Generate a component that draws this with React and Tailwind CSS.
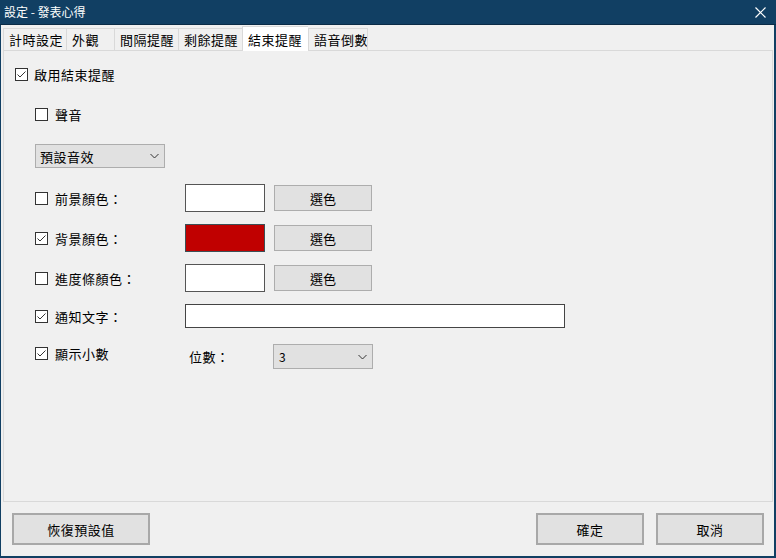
import React from "react";

const font = { fontFamily: '"Noto Sans CJK TC", "Noto Sans", sans-serif' };

const tabs = [
  { label: "計時設定", w: "w-[63px]" },
  { label: "外觀", w: "w-[48px]" },
  { label: "間隔提醒", w: "w-[64px]" },
  { label: "剩餘提醒", w: "w-[64px]" },
  { label: "結束提醒", w: "w-[66px]", active: true },
  { label: "語音倒數", w: "w-[60px]" },
];

function Check({ checked }) {
  return (
    <div className="w-[13px] h-[13px] shrink-0 border border-[#333333] bg-white flex items-center justify-center">
      {checked && (
        <svg width="11" height="11" viewBox="0 0 11 11">
          <path d="M1.5 5.5 L4 8 L9.5 2.5" fill="none" stroke="#333333" strokeWidth="1" />
        </svg>
      )}
    </div>
  );
}

function Chevron() {
  return (
    <svg width="9" height="6" viewBox="0 0 9 6">
      <path d="M0.5 1 L4.5 5 L8.5 1" fill="none" stroke="#333333" strokeWidth="1" />
    </svg>
  );
}

function Label({ checked, text }) {
  return (
    <div className="w-[150px] flex items-center gap-[7px]">
      <Check checked={checked} />
      <span className="text-[13px] tracking-[0.5px] leading-none text-black">{text}</span>
    </div>
  );
}

function ColorRow({ checked, text, color }) {
  return (
    <div className="h-[28px] flex items-center">
      <Label checked={checked} text={text} />
      <div
        className={`w-[80px] h-[28px] border ${color ? "bg-[#c00000] border-[#3c4f55]" : "bg-white border-[#555555]"}`}
      />
      <button
        type="button"
        className="ml-[9px] w-[98px] h-[26px] bg-[#e1e1e1] border border-[#adadad] text-[13px] leading-none text-black"
      >
        選色
      </button>
    </div>
  );
}

export default function App() {
  return (
    <div className="w-[776px] h-[558px] flex flex-col bg-[#f0f0f0] overflow-hidden" style={font}>
      <div className="h-[25px] shrink-0 bg-[#113f63] border-b border-[#0a2b46] flex items-center justify-between pl-[4px] pr-[10px]">
        <span className="text-[12px] leading-none text-white">設定 - 發表心得</span>
        <svg width="11" height="11" viewBox="0 0 11 11">
          <path d="M0.5 0.5 L10.5 10.5 M10.5 0.5 L0.5 10.5" stroke="#ffffff" strokeWidth="1.2" />
        </svg>
      </div>
      <div className="flex-1 flex flex-col border-l border-r-2 border-b-2 border-[#113f63] pl-[2px] pr-[1px]">
        <div className="h-[25px] shrink-0 flex items-end">
          {tabs.map((t, i) => (
            <div
              key={t.label}
              className={`${t.w} shrink-0 whitespace-nowrap overflow-hidden flex items-center pl-[5px] text-[13px] tracking-[0.5px] leading-none text-black border-t border-l border-[#d9d9d9] ${
                i === tabs.length - 1 ? "border-r" : ""
              } ${t.active ? "h-[25px] bg-white -mb-[1px] relative z-10" : "h-[22px] bg-[#f0f0f0]"}`}
            >
              {t.label}
            </div>
          ))}
        </div>
        <div className="h-[452px] shrink-0 border border-[#d9d9d9] bg-[#f0f0f0] flex flex-col pt-[16px]">
          <div className="h-[14px] flex items-center gap-[6px] pl-[11px]">
            <Check checked />
            <span className="text-[13px] tracking-[0.5px] leading-none text-black">啟用結束提醒</span>
          </div>
          <div className="pl-[31px] flex flex-col">
            <div className="mt-[27px] h-[13px] flex items-center">
              <Label text="聲音" />
            </div>
            <div className="mt-[23px] w-[130px] h-[24px] bg-[#e1e1e1] border border-[#adadad] flex items-center justify-between pl-[4px] pr-[5px]">
              <span className="text-[13px] tracking-[0.5px] leading-none text-black">預設音效</span>
              <Chevron />
            </div>
            <div className="mt-[16px] flex flex-col gap-[12px]">
              <ColorRow text="前景顏色：" />
              <ColorRow checked text="背景顏色：" color />
              <ColorRow text="進度條顏色：" />
              <div className="h-[24px] flex items-center">
                <Label checked text="通知文字：" />
                <div className="w-[380px] h-[24px] bg-white border border-[#444444]" />
              </div>
            </div>
            <div className="mt-[16px] h-[25px] flex items-center">
              <div className="-mt-[6px]">
                <Label checked text="顯示小數" />
              </div>
              <span className="ml-[4px] w-[84px] text-[13px] tracking-[0.5px] leading-none text-black">位數：</span>
              <div className="w-[100px] h-[25px] bg-[#e1e1e1] border border-[#adadad] flex items-center justify-between pl-[5px] pr-[5px]">
                <span className="text-[12px] leading-none text-black">3</span>
                <Chevron />
              </div>
            </div>
          </div>
        </div>
        <div className="flex-1 flex items-center justify-between pl-[9px] pr-[9px]">
          <button
            type="button"
            className="w-[138px] h-[32px] bg-[#e1e1e1] border-2 border-[#a8a8a8] text-[13px] tracking-[0.5px] leading-none text-black"
          >
            恢復預設值
          </button>
          <div className="flex gap-[12px]">
            <button
              type="button"
              className="w-[108px] h-[32px] bg-[#e1e1e1] border-2 border-[#a8a8a8] text-[13px] tracking-[0.5px] leading-none text-black"
            >
              確定
            </button>
            <button
              type="button"
              className="w-[108px] h-[32px] bg-[#e1e1e1] border-2 border-[#a8a8a8] text-[13px] tracking-[0.5px] leading-none text-black"
            >
              取消
            </button>
          </div>
        </div>
      </div>
    </div>
  );
}
